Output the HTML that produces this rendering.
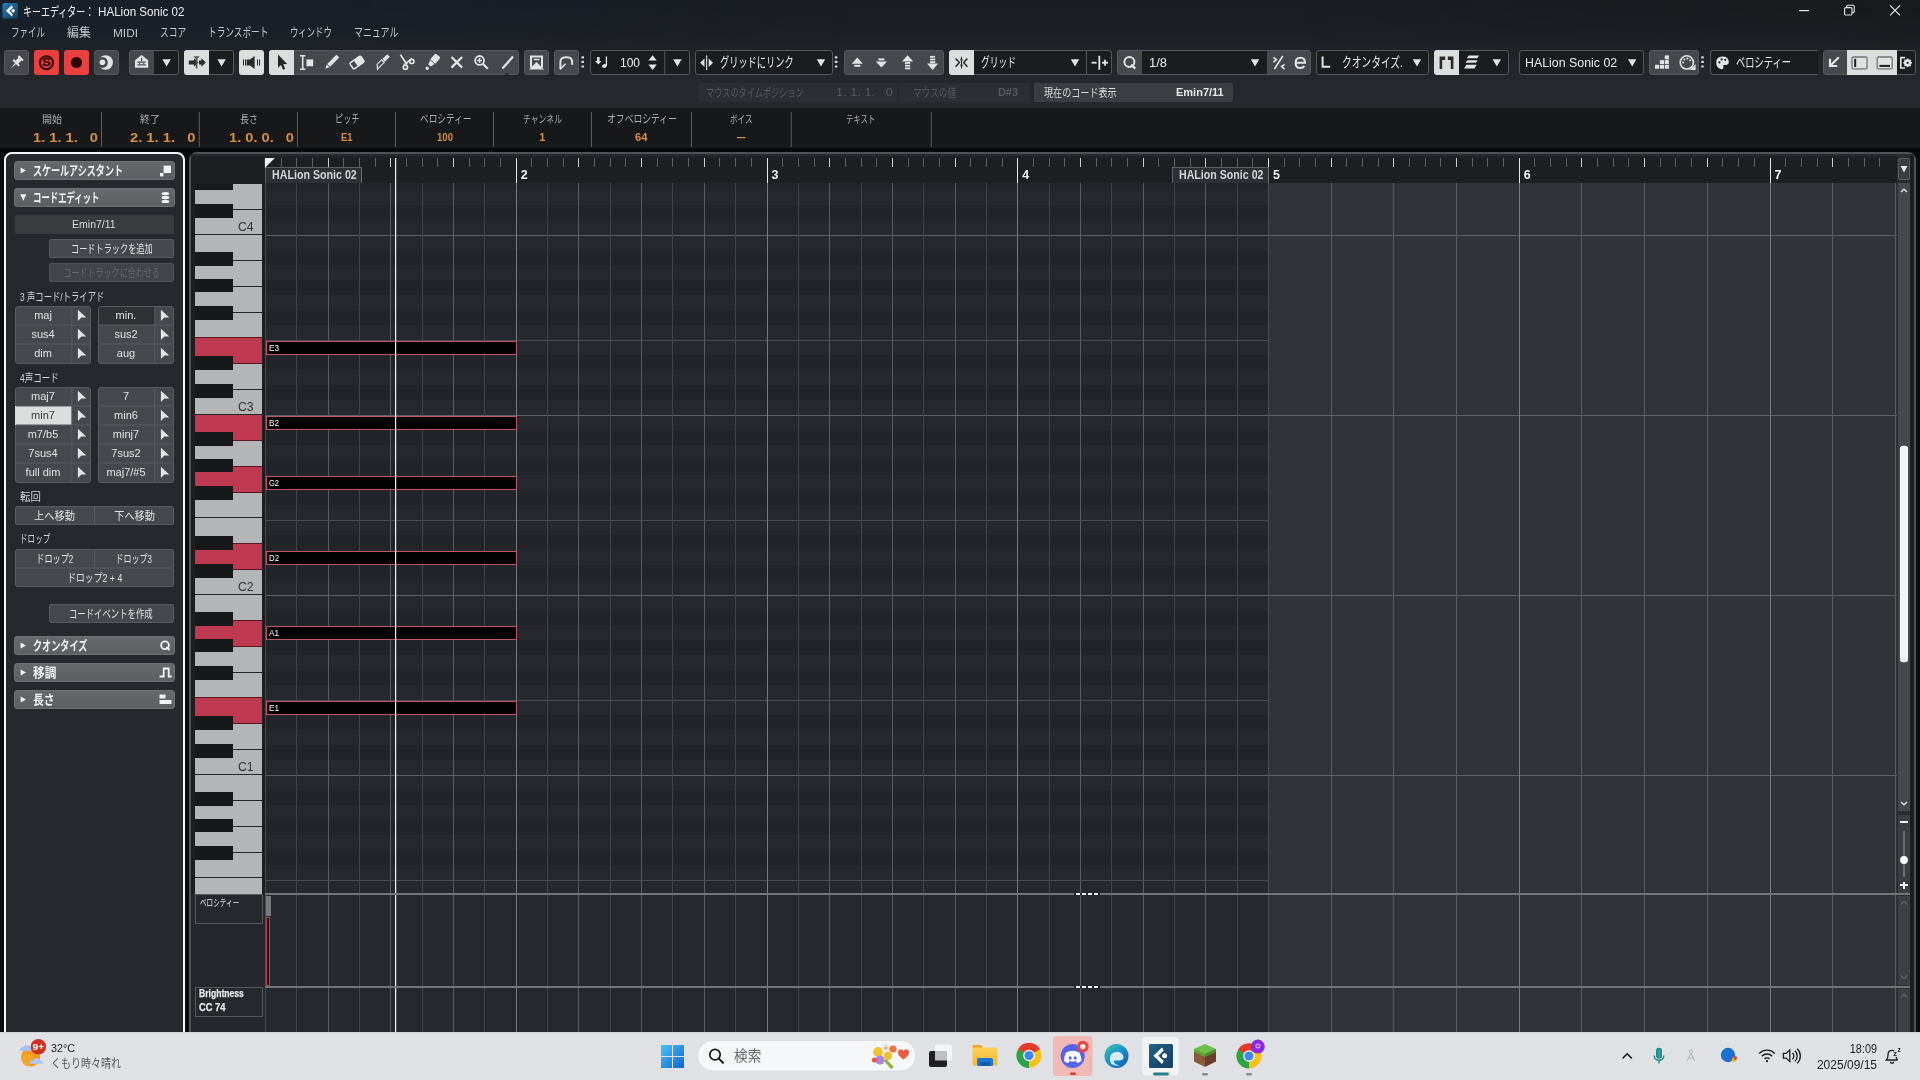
<!DOCTYPE html>
<html lang="ja"><head><meta charset="utf-8"><title>キーエディター： HALion Sonic 02</title>
<style>
html,body{margin:0;padding:0;background:#000;}
body{width:1920px;height:1080px;overflow:hidden;position:relative;font-family:"Liberation Sans","Noto Sans CJK JP",sans-serif;}
#r{will-change:transform;position:absolute;left:0;top:0;width:1920px;height:1080px;overflow:hidden;background:#0a0b0c;}
#r div,#r svg,#r span{position:absolute;box-sizing:border-box;}
#r span{white-space:pre;display:block;}
</style></head>
<body><div id="r">
<div style="left:0px;top:0px;width:1920px;height:108px;background:linear-gradient(180deg,#1a1d22 0px,#1c1f24 30px,#202327 52px,#24272b 78px,#26292d 108px);"></div>
<div style="left:0px;top:0px;width:1920px;height:80px;background:linear-gradient(90deg,rgba(22,38,58,.36) 0px,rgba(22,36,54,.26) 450px,rgba(24,28,34,0) 850px,rgba(20,20,20,0) 1300px,rgba(18,18,18,.30) 1920px);-webkit-mask-image:linear-gradient(180deg,#000 0,#000 12px,transparent 62px);mask-image:linear-gradient(180deg,#000 0,#000 12px,transparent 62px);"></div>
<div style="left:0px;top:108px;width:1920px;height:40px;background:#17181a;"></div>
<div style="left:0px;top:148px;width:1920px;height:4px;background:#070808;"></div>
<div style="left:4px;top:152px;width:181px;height:900px;background:#25282d;border:2px solid #f4f5f6;border-radius:8px;"></div>
<div style="left:189px;top:152px;width:1727px;height:900px;background:#1c1e21;border:2px solid #4e5155;border-radius:8px;"></div>
<span style="left:23.4px;top:3.14px;font-size:12.84px;line-height:18px;color:#eeeeee;transform:scaleX(0.699);transform-origin:0 50%;">キーエディター：</span>
<span style="left:98.3px;top:2.8px;font-size:12.5px;line-height:18px;color:#eeeeee;transform:scaleX(0.929);transform-origin:0 50%;">HALion Sonic 02</span>
<span style="left:10.8px;top:24.72px;font-size:12.41px;line-height:17px;color:#c4c6c8;transform:scaleX(0.685);transform-origin:0 50%;">ファイル</span>
<span style="left:67px;top:24.72px;font-size:12.41px;line-height:17px;color:#c4c6c8;transform:scaleX(0.959);transform-origin:0 50%;">編集</span>
<span style="left:113.3px;top:24.7px;font-size:11.6px;line-height:16px;color:#c4c6c8;transform:scaleX(1.021);transform-origin:0 50%;">MIDI</span>
<span style="left:160px;top:24.72px;font-size:12.41px;line-height:17px;color:#c4c6c8;transform:scaleX(0.704);transform-origin:0 50%;">スコア</span>
<span style="left:208px;top:24.72px;font-size:12.41px;line-height:17px;color:#c4c6c8;transform:scaleX(0.697);transform-origin:0 50%;">トランスポート</span>
<span style="left:290px;top:24.72px;font-size:12.41px;line-height:17px;color:#c4c6c8;transform:scaleX(0.674);transform-origin:0 50%;">ウィンドウ</span>
<span style="left:354px;top:24.72px;font-size:12.41px;line-height:17px;color:#c4c6c8;transform:scaleX(0.720);transform-origin:0 50%;">マニュアル</span>
<div style="left:4px;top:50px;width:25px;height:25px;background:#45484c;border:1px solid #56595d;border-radius:3px;"></div>
<div style="left:34px;top:50px;width:25px;height:25px;background:#e8413f;border-radius:3px;"></div>
<span style="left:43.06px;top:55.35px;font-size:10.6px;line-height:15px;color:#3a0606;font-weight:700;-webkit-text-stroke:.3px #3a0606;transform:scaleX(1.215);transform-origin:50% 50%;">S</span>
<div style="left:64px;top:50px;width:25px;height:25px;background:#e8413f;border-radius:3px;"></div>
<div style="left:94px;top:50px;width:25px;height:25px;background:#45484c;border:1px solid #56595d;border-radius:3px;"></div>
<div style="left:129px;top:50px;width:50px;height:25px;background:#45484c;border:1px solid #56595d;border-radius:3px;"></div>
<div style="left:154px;top:51px;width:24px;height:23px;background:#1b1c1e;border-radius:0px 2px 2px 0px;"></div>
<div style="left:184px;top:50px;width:50px;height:25px;background:#45484c;border:1px solid #56595d;border-radius:3px;"></div>
<div style="left:184px;top:50px;width:25px;height:25px;background:#dcdddd;border-radius:3px 0px 0px 3px;"></div>
<div style="left:209px;top:51px;width:24px;height:23px;background:#1b1c1e;border-radius:0px 2px 2px 0px;"></div>
<div style="left:239px;top:50px;width:25px;height:25px;background:#dcdddd;border-radius:3px;"></div>
<div style="left:269px;top:50px;width:250px;height:25px;background:#45484c;border:1px solid #56595d;border-radius:3px;"></div>
<div style="left:269px;top:50px;width:25px;height:25px;background:#dcdddd;border-radius:3px 0px 0px 3px;"></div>
<div style="left:524px;top:50px;width:25px;height:25px;background:#45484c;border:1px solid #56595d;border-radius:3px;"></div>
<div style="left:554px;top:50px;width:25px;height:25px;background:#45484c;border:1px solid #56595d;border-radius:3px;"></div>
<div style="left:590px;top:50px;width:100px;height:25px;background:#1b1c1e;border:1px solid #54575b;border-radius:3px;"></div>
<span style="left:620px;top:53.8px;font-size:12.5px;line-height:18px;color:#ececec;transform:scaleX(0.959);transform-origin:0 50%;">100</span>
<div style="left:695px;top:50px;width:137.5px;height:25px;background:#1b1c1e;border:1px solid #54575b;border-radius:3px;"></div>
<span style="left:720.3px;top:53.46px;font-size:13.27px;line-height:19px;color:#ececec;transform:scaleX(0.694);transform-origin:0 50%;">グリッドにリンク</span>
<div style="left:844px;top:50px;width:100px;height:25px;background:#45484c;border:1px solid #56595d;border-radius:3px;"></div>
<div style="left:949px;top:50px;width:163px;height:25px;background:#1b1c1e;border:1px solid #54575b;border-radius:3px;"></div>
<div style="left:949px;top:50px;width:25px;height:25px;background:#dcdddd;border-radius:3px 0px 0px 3px;"></div>
<span style="left:980.8px;top:53.46px;font-size:13.27px;line-height:19px;color:#ececec;transform:scaleX(0.660);transform-origin:0 50%;">グリッド</span>
<div style="left:1117px;top:50px;width:194px;height:25px;background:#45484c;border:1px solid #56595d;border-radius:3px;"></div>
<div style="left:1142px;top:51px;width:125px;height:23px;background:#1b1c1e;border-radius:0px 0px 0px 0px;"></div>
<span style="left:1149px;top:53.8px;font-size:12.5px;line-height:18px;color:#ececec;transform:scaleX(1.035);transform-origin:0 50%;">1/8</span>
<div style="left:1316px;top:50px;width:113px;height:25px;background:#1b1c1e;border:1px solid #54575b;border-radius:3px;"></div>
<span style="left:1341.7px;top:53.46px;font-size:13.27px;line-height:19px;color:#ececec;transform:scaleX(0.733);transform-origin:0 50%;">クオンタイズ.</span>
<div style="left:1434px;top:50px;width:75px;height:25px;background:#1b1c1e;border:1px solid #54575b;border-radius:3px;"></div>
<div style="left:1434px;top:50px;width:25px;height:25px;background:#dcdddd;border-radius:3px 0px 0px 3px;"></div>
<div style="left:1519px;top:50px;width:125px;height:25px;background:#1b1c1e;border:1px solid #54575b;border-radius:3px;"></div>
<span style="left:1525.3px;top:53.8px;font-size:12.5px;line-height:18px;color:#ececec;transform:scaleX(0.990);transform-origin:0 50%;">HALion Sonic 02</span>
<div style="left:1649px;top:50px;width:50px;height:25px;background:#45484c;border:1px solid #56595d;border-radius:3px;"></div>
<div style="left:1710px;top:50px;width:108px;height:25px;background:#1b1c1e;border:1px solid #54575b;border-right:none;border-radius:3px 0 0 3px;"></div>
<span style="left:1735.8px;top:53.36px;font-size:13.27px;line-height:19px;color:#ececec;transform:scaleX(0.698);transform-origin:0 50%;">ベロシティー</span>
<div style="left:1822.5px;top:50px;width:93.5px;height:25px;background:#45484c;border:1px solid #56595d;border-radius:3px;"></div>
<div style="left:1847px;top:50px;width:50px;height:25px;background:#dcdddd;border-radius:0px 0px 0px 0px;"></div>
<div style="left:1897px;top:51px;width:18px;height:23px;background:#1b1c1e;border-radius:0px 2px 2px 0px;"></div>
<div style="left:698px;top:82.5px;width:199.5px;height:19.5px;background:#2b2e32;border-radius:3px 0 0 3px;"></div>
<div style="left:899px;top:82.5px;width:130.5px;height:19.5px;background:#2b2e32;"></div>
<div style="left:1034px;top:82.5px;width:199px;height:19.5px;background:#3a3d41;border-radius:0 3px 3px 0;"></div>
<span style="left:706px;top:84.8px;font-size:11.77px;line-height:16px;color:#585b5f;transform:scaleX(0.693);transform-origin:0 50%;">マウスのタイムポジション</span>
<span style="left:836px;top:84.8px;font-size:11px;line-height:15px;color:#585b5f;transform:scaleX(1.165);transform-origin:0 50%;">1. 1. 1.   0</span>
<span style="left:912.5px;top:84.8px;font-size:11.77px;line-height:16px;color:#585b5f;transform:scaleX(0.732);transform-origin:0 50%;">マウスの値</span>
<span style="left:998px;top:84.8px;font-size:11px;line-height:15px;color:#585b5f;font-weight:700;transform:scaleX(0.991);transform-origin:0 50%;">D#3</span>
<span style="left:1043.7px;top:84.8px;font-size:11.77px;line-height:16px;color:#dadbdc;transform:scaleX(0.772);transform-origin:0 50%;">現在のコード表示</span>
<span style="left:1176px;top:84.8px;font-size:11px;line-height:15px;color:#e6e6e6;font-weight:700;">Emin7/11</span>
<span style="left:42px;top:111.75px;font-size:10.7px;line-height:15px;color:#a9abad;transform:scaleX(0.935);transform-origin:0 50%;">開始</span>
<span style="left:32.5px;top:129.9px;font-size:12px;line-height:17px;color:#d98e3c;font-weight:700;transform:scaleX(1.218);transform-origin:0 50%;">1. 1. 1.   0</span>
<span style="left:140px;top:111.75px;font-size:10.7px;line-height:15px;color:#a9abad;transform:scaleX(0.935);transform-origin:0 50%;">終了</span>
<span style="left:130px;top:129.9px;font-size:12px;line-height:17px;color:#d98e3c;font-weight:700;transform:scaleX(1.227);transform-origin:0 50%;">2. 1. 1.   0</span>
<span style="left:239.5px;top:111.75px;font-size:10.7px;line-height:15px;color:#a9abad;transform:scaleX(0.841);transform-origin:0 50%;">長さ</span>
<span style="left:228.8px;top:129.9px;font-size:12px;line-height:17px;color:#d98e3c;font-weight:700;transform:scaleX(1.218);transform-origin:0 50%;">1. 0. 0.   0</span>
<span style="left:335px;top:110.8px;font-size:11.77px;line-height:16px;color:#a9abad;transform:scaleX(0.694);transform-origin:0 50%;">ピッチ</span>
<span style="left:340.5px;top:131.4px;font-size:10px;line-height:14px;color:#d98e3c;font-weight:700;transform:scaleX(0.940);transform-origin:0 50%;">E1</span>
<span style="left:419.5px;top:110.8px;font-size:11.77px;line-height:16px;color:#a9abad;transform:scaleX(0.737);transform-origin:0 50%;">ベロシティー</span>
<span style="left:437px;top:131.4px;font-size:10px;line-height:14px;color:#d98e3c;font-weight:700;transform:scaleX(0.959);transform-origin:0 50%;">100</span>
<span style="left:522.7px;top:111.75px;font-size:10.7px;line-height:15px;color:#a9abad;transform:scaleX(0.734);transform-origin:0 50%;">チャンネル</span>
<span style="left:539.24px;top:129.9px;font-size:11px;line-height:15px;color:#d98e3c;font-weight:700;">1</span>
<span style="left:607px;top:110.8px;font-size:11.77px;line-height:16px;color:#a9abad;transform:scaleX(0.749);transform-origin:0 50%;">オフベロシティー</span>
<span style="left:635px;top:131.4px;font-size:10px;line-height:14px;color:#d98e3c;font-weight:700;transform:scaleX(1.115);transform-origin:0 50%;">64</span>
<span style="left:729.5px;top:111.75px;font-size:10.7px;line-height:15px;color:#a9abad;transform:scaleX(0.709);transform-origin:0 50%;">ボイス</span>
<span style="left:845.7px;top:111.75px;font-size:10.7px;line-height:15px;color:#a9abad;transform:scaleX(0.690);transform-origin:0 50%;">テキスト</span>
<svg style="left:0px;top:0px;" width="1920" height="150" viewBox="0 0 1920 150"><defs><linearGradient id="cb" x1="0" y1="0" x2="1" y2="1"><stop offset="0" stop-color="#2a7ab8"/><stop offset="1" stop-color="#123f63"/></linearGradient></defs><rect x="2.5" y="3" width="15.5" height="15.5" rx="1.5" fill="url(#cb)"/><path d="M11.8 5.2L6 10.8l5.8 5.6 1.1-2.2-3.5-3.4 3.5-3.4z" fill="#fff"/><circle cx="13.1" cy="10.8" r="1.7" fill="#fff"/><rect x="1799" y="10" width="10" height="1.2" fill="#e6e6e6"/><rect x="1844.6" y="7.6" width="7.4" height="7.4" rx="1.2" fill="none" stroke="#e6e6e6" stroke-width="1.1"/><path d="M1846.8 7.4v-1.2q0-1 1-1h5.2q1.2 0 1.2 1.2v5.2q0 1-1 1h-1.2" fill="none" stroke="#e6e6e6" stroke-width="1.1"/><path d="M1890 5.3l10 10M1900 5.3l-10 10" stroke="#e6e6e6" stroke-width="1.2"/><g transform="translate(16.5,62.5) rotate(45)" fill="#e2e3e4"><rect x="-3.2" y="-7" width="6.4" height="2.2"/><rect x="-2" y="-5" width="4" height="4.6"/><rect x="-4.2" y="-.6" width="8.4" height="2"/><path d="M-.8 1.4h1.6l-.8 7z"/></g><circle cx="46.5" cy="62.700" r="6.500" fill="none" stroke="#3a0606" stroke-width="2.100"/><circle cx="76.5" cy="62.5" r="5.6" fill="#2e0505"/><circle cx="105.600" cy="62.500" r="7.300" fill="#e2e3e4"/><circle cx="102.300" cy="62.400" r="5.500" fill="#45484c"/><rect x="94.500" y="54" width="5.500" height="17" fill="#45484c"/><circle cx="102.400" cy="62.300" r="2.800" fill="#e2e3e4"/><path d="M135 60.300l6.600-5.300 6.600 5.300v7.500h-13.200z" fill="#e2e3e4"/><g fill="#45484c"><rect x="137.400" y="61.500" width="8.400" height="1.200"/><rect x="137.400" y="64.300" width="8.400" height="1.200"/><rect x="141" y="58" width="1.200" height="3.500"/><rect x="139" y="62.700" width="1" height="1.600"/><rect x="143.200" y="62.700" width="1" height="1.600"/></g><path d="M162.4 59.13h8.4l-4.2 7.3500000000000005z" fill="#e2e3e4"/><path d="M188.8 60.6h5.2v-2.4l4.4 4.3-4.4 4.3v-2.4h-5.2z" fill="#2a2a2a"/><path d="M193.4 56.2h6.4l-2.4 2.6v9.6h-1.6v-9.6z" fill="#555"/><path d="M199 60.6h2.4v-2.4l4.4 4.3-4.4 4.3v-2.4h-2.4z" fill="#2a2a2a"/><path d="M217.4 59.13h8.4l-4.2 7.3500000000000005z" fill="#e2e3e4"/><path d="M246.6 59.6h3.4l4.6-3.6v13l-4.6-3.6h-3.4z" fill="#2a2a2a"/><rect x="243" y="59.5" width="1" height="6" fill="#2a2a2a"/><rect x="245" y="59.5" width="1" height="6" fill="#2a2a2a"/><rect x="257" y="59.5" width="1" height="6" fill="#2a2a2a"/><rect x="259" y="59.5" width="1" height="6" fill="#2a2a2a"/><path d="M278 54.6v13.2l3-2.7 2 4.6 2.2-1-2-4.5 4-.3z" fill="#262626"/><path d="M300 55h5.4v1.4h-1.9v12.2h1.9v1.4h-5.4v-1.4h1.9v-12.2h-1.9z" fill="#e2e3e4"/><rect x="306.4" y="59.4" width="6.8" height="6.8" fill="#e2e3e4"/><g transform="translate(331.5,62.5) rotate(45)" fill="#e2e3e4"><rect x="-2" y="-9" width="4" height="13"/><path d="M-2 4.8h4l-2 4z"/></g><g transform="translate(357,62.5) rotate(-35)"><rect x="-6.6" y="-3.6" width="13.2" height="7.2" rx="1.2" fill="none" stroke="#e2e3e4" stroke-width="1.5"/><rect x="-1.5" y="-3.6" width="8.1" height="7.2" rx="1" fill="#e2e3e4"/></g><g transform="translate(381.5,62.5) rotate(45)"><rect x="-1.8" y="-10" width="3.6" height="7" fill="#e2e3e4"/><path d="M-1.8 -2h3.6v9.5l-3.6-3z" fill="none" stroke="#e2e3e4" stroke-width="1.2"/></g><g fill="none" stroke="#e2e3e4" stroke-width="1.7"><path d="M400.4 54.8l6.6 9.6M412 58.4l-8 6.4"/><circle cx="405.4" cy="67.2" r="2.1"/><circle cx="411.8" cy="61.4" r="2.1"/></g><g transform="translate(432.5,62) rotate(40)" fill="#e2e3e4"><rect x="-3.4" y="-8.6" width="6.8" height="8.2" rx="1.2"/><path d="M-3 .2h6l-1.4 4.4h-3.2z"/><circle cx="0" cy="8.2" r="1.7"/></g><path d="M451.5 57l10.6 10.6M462.1 57l-10.6 10.6" stroke="#e2e3e4" stroke-width="2.3"/><circle cx="479.6" cy="60.4" r="4.4" fill="none" stroke="#e2e3e4" stroke-width="1.8"/><path d="M482.8 63.8l5 5" stroke="#e2e3e4" stroke-width="2.2"/><path d="M477.2 60.4h4.8M479.6 58v4.8" stroke="#e2e3e4" stroke-width="1.5"/><path d="M502.4 68.6l10.6-12" stroke="#e2e3e4" stroke-width="2.2"/><path d="M504.6 75l2.2-2.4 2.2 2.4z" fill="#25282c"/><path d="M530 55.4h13v2h-11v10h-2z M543 55.4v12h-2v-10z" fill="#e2e3e4"/><rect x="533.6" y="58.8" width="5.8" height="1.4" fill="#e2e3e4"/><path d="M529 69.4l7.5-7.4 7.5 7.4z" fill="#e2e3e4"/><path d="M560.4 68.8v-6.4q0-5.2 5.4-5.2h1.2q5.2 0 5.2 5.2v2.4" fill="none" stroke="#e2e3e4" stroke-width="2"/><path d="M560 69.4l5.6-5.6" stroke="#e2e3e4" stroke-width="1.6"/><rect x="581.4" y="56.2" width="2.6" height="2.2" rx=".5" fill="#d8d8d8"/><rect x="581.4" y="60.8" width="2.6" height="2.2" rx=".5" fill="#d8d8d8"/><rect x="581.4" y="65.4" width="2.6" height="2.2" rx=".5" fill="#d8d8d8"/><rect x="664.2" y="51" width="1" height="23" fill="#54575b"/><path d="M597 57h2.6v4h2l-3.3 3.6-3.3-3.6h2z" fill="#e2e3e4"/><path d="M606.4 56.4v9.4" stroke="#e2e3e4" stroke-width="1.3"/><ellipse cx="604.4" cy="66" rx="2.4" ry="1.8" fill="#e2e3e4" transform="rotate(-20 604.4 66)"/><path d="M648.4 60.6h8.4l-4.2-5.4z M648.4 64.6h8.4l-4.2 5.4z" fill="#e2e3e4"/><path d="M673.1999999999999 59.13h8.4l-4.2 7.3500000000000005z" fill="#e2e3e4"/><rect x="706.100" y="55.500" width="1.100" height="14.500" fill="#e2e3e4"/><path d="M700.200 62.700l4.300-4.300v8.600z M713 62.700l-4.300-4.300v8.600z" fill="#e2e3e4"/><path d="M816.8 59.13h8.4l-4.2 7.3500000000000005z" fill="#e2e3e4"/><rect x="834.8" y="56.2" width="2.6" height="2.2" rx=".5" fill="#d8d8d8"/><rect x="834.8" y="60.8" width="2.6" height="2.2" rx=".5" fill="#d8d8d8"/><rect x="834.8" y="65.4" width="2.6" height="2.2" rx=".5" fill="#d8d8d8"/><path d="M851.6999999999999 63.800000000000004h11.2l-5.6 -6.2z" fill="#e2e3e4"/><rect x="854.3" y="64.8" width="6" height="2" fill="#e2e3e4"/><path d="M875.8 61.4h11.2l-5.6 6.2z" fill="#e2e3e4"/><rect x="878.4" y="58.4" width="6" height="2" fill="#e2e3e4"/><path d="M902.0 61.6h11.2l-5.6 -6.4z" fill="#e2e3e4"/><rect x="905.0" y="62.1" width="5.2" height="1.8" fill="#e2e3e4"/><rect x="905.0" y="64.8" width="5.2" height="1.8" fill="#e2e3e4"/><rect x="905.0" y="67.5" width="5.2" height="1.8" fill="#e2e3e4"/><path d="M927.0 63.6h11.2l-5.6 6.4z" fill="#e2e3e4"/><rect x="930.0" y="61.300000000000004" width="5.2" height="1.8" fill="#e2e3e4"/><rect x="930.0" y="58.6" width="5.2" height="1.8" fill="#e2e3e4"/><rect x="930.0" y="55.9" width="5.2" height="1.8" fill="#e2e3e4"/><rect x="1086" y="51" width="1" height="23" fill="#54575b"/><g stroke="#2a2a2a" stroke-width="1.5" fill="none"><path d="M955.6 58.4l3.8 4.2-3.8 4.2M967.4 58.4l-3.8 4.2 3.8 4.2"/></g><path d="M961.5 56l1.3 4.6h-2.6z M961.5 69.2l1.3-4.6h-2.6z" fill="#2a2a2a"/><rect x="961" y="59" width="1" height="7" fill="#2a2a2a"/><path d="M1070.8 59.13h8.4l-4.2 7.3500000000000005z" fill="#e2e3e4"/><rect x="1091.6" y="61.8" width="5" height="1.8" fill="#e2e3e4"/><rect x="1098.4" y="55.8" width="1.8" height="14" fill="#e2e3e4"/><rect x="1102" y="61.8" width="6" height="1.8" fill="#e2e3e4"/><rect x="1104.1" y="59.7" width="1.8" height="6" fill="#e2e3e4"/><circle cx="1129.4" cy="62" r="5" fill="none" stroke="#e2e3e4" stroke-width="2"/><path d="M1131.2 64.6l4 4" stroke="#e2e3e4" stroke-width="2.2"/><path d="M1250.8 59.13h8.4l-4.2 7.3500000000000005z" fill="#e2e3e4"/><g stroke="#e2e3e4" stroke-width="1.6" fill="none"><path d="M1274.4 69l8.4-13"/><path d="M1273.4 57.4l3 2.2-3 2.6"/><path d="M1284.6 64.4l-3 2.2 3 2.6"/></g><path d="M1296.6 62.8h8.4q0-5-4.6-5-4.8 0-4.8 5.2 0 5 4.8 5 2.6 0 4-1.8" fill="none" stroke="#e2e3e4" stroke-width="2"/><path d="M1322.6 56.4v10.4h7.6" fill="none" stroke="#e2e3e4" stroke-width="2"/><path d="M1412.8 59.13h8.4l-4.2 7.3500000000000005z" fill="#e2e3e4"/><path d="M1439.6 69v-12.4h5.6v3.4h-3v9z M1447.8 56.6h5.6v12.4h-2.6v-9h-3z" fill="#2a2a2a"/><g fill="#e2e3e4"><path d="M1466.8 58.2l2-2.6h10.4l-2 2.6z"/><path d="M1465.4 62.8l2-2.6h10.4l-2 2.6z"/><path d="M1464 68.4l2.4-3.6h10.4l-2.4 3.6z"/></g><path d="M1492.6 59.13h8.4l-4.2 7.3500000000000005z" fill="#e2e3e4"/><path d="M1628.0 59.13h8.4l-4.2 7.3500000000000005z" fill="#e2e3e4"/><g fill="#e2e3e4"><rect x="1655.0" y="64.8" width="4.100" height="3.900"/><rect x="1659.9" y="64.8" width="4.100" height="3.900"/><rect x="1659.9" y="60.1" width="4.100" height="3.900"/><rect x="1664.8" y="64.8" width="4.100" height="3.900"/><rect x="1664.8" y="60.1" width="4.100" height="3.900"/><rect x="1664.8" y="55.4" width="4.100" height="3.900"/></g><circle cx="1686.8" cy="62.4" r="6.6" fill="none" stroke="#e2e3e4" stroke-width="1.6"/><g fill="#e2e3e4"><circle cx="1683" cy="62.6" r="1"/><circle cx="1684.4" cy="59.6" r="1"/><circle cx="1687.4" cy="58.6" r="1"/><circle cx="1690.2" cy="60.2" r="1"/><path d="M1695.6 64v6h-6z"/></g><rect x="1701.2" y="56.2" width="2.6" height="2.2" rx=".5" fill="#d8d8d8"/><rect x="1701.2" y="60.8" width="2.6" height="2.2" rx=".5" fill="#d8d8d8"/><rect x="1701.2" y="65.4" width="2.6" height="2.2" rx=".5" fill="#d8d8d8"/><path d="M1722.4 56.4q6.4 0 6.4 5.6 0 3-3.2 3h-1.4q-1.2 0-1 1.4l.2 1q.2 1.8-1.6 1.8-5.6-.6-5.6-6.4 0-6.4 6.200-6.400z" fill="#e2e3e4"/><circle cx="1719.4" cy="62.4" r="1.1" fill="#1b1c1e"/><circle cx="1721.6" cy="59.4" r="1.1" fill="#1b1c1e"/><circle cx="1725.200" cy="59.800" r="1.1" fill="#1b1c1e"/><path d="M1838.800 57.200l-8 8M1830 58.800v7.200h7.200" fill="none" stroke="#e2e3e4" stroke-width="2.2"/><rect x="1852" y="57" width="15" height="11.800" rx="1.200" fill="#e2e2e0" stroke="#727476" stroke-width="1.300"/><rect x="1854.200" y="58.800" width="2" height="8.200" fill="#1e1e1e"/><rect x="1877.200" y="57" width="15" height="11.800" rx="1.200" fill="#e2e2e0" stroke="#727476" stroke-width="1.300"/><rect x="1879.400" y="64.900" width="10.600" height="2" fill="#1e1e1e"/><path d="M1905 57.600h-4.200v10.400h4.200" fill="none" stroke="#e2e3e4" stroke-width="1.600"/><circle cx="1907.600" cy="62.800" r="2.600" fill="none" stroke="#e2e3e4" stroke-width="2"/><g stroke="#e2e3e4" stroke-width="1.400"><path d="M1907.600 58.400v8.800M1903.200 62.800h8.800M1904.500 59.700l6.200 6.200M1910.700 59.700l-6.200 6.200"/></g><circle cx="1907.600" cy="62.800" r="1.100" fill="#1b1c1e"/><rect x="101.0" y="112" width="1" height="35" fill="#5c5e60"/><rect x="198.8" y="112" width="1" height="35" fill="#5c5e60"/><rect x="297.0" y="112" width="1" height="35" fill="#5c5e60"/><rect x="395.0" y="112" width="1" height="35" fill="#5c5e60"/><rect x="493.0" y="112" width="1" height="35" fill="#5c5e60"/><rect x="591.0" y="112" width="1" height="35" fill="#5c5e60"/><rect x="691.0" y="112" width="1" height="35" fill="#5c5e60"/><rect x="790.7" y="112" width="1" height="35" fill="#5c5e60"/><rect x="930.7" y="112" width="1" height="35" fill="#5c5e60"/><rect x="737" y="137" width="8.600" height="1.200" fill="#d98e3c"/></svg>
<svg style="left:0px;top:0px;shape-rendering:crispEdges;" width="1920" height="1080" viewBox="0 0 1920 1080"><rect x="191" y="154" width="1723" height="29" fill="#1c1e21"/><rect x="265.5" y="154" width="1003" height="29" fill="#1d1f23"/><rect x="1268.5" y="154" width="641.5" height="29" fill="#1d1f23"/><rect x="191" y="154" width="1723" height="1.5" fill="#25282c"/><rect x="191" y="155.5" width="1723" height="1.5" fill="#212327"/><rect x="262" y="183" width="4" height="866" fill="#1b1d20"/><rect x="265.5" y="183" width="1003" height="710" fill="#25282d"/><rect x="1268.5" y="183" width="628.5" height="710" fill="#323338"/><rect x="265.5" y="183" width="1003" height="7" fill="#212428"/><rect x="265.5" y="205" width="1003" height="15" fill="#212428"/><rect x="265.5" y="250" width="1003" height="15" fill="#212428"/><rect x="265.5" y="280" width="1003" height="15" fill="#212428"/><rect x="265.5" y="310" width="1003" height="15" fill="#212428"/><rect x="265.5" y="355" width="1003" height="15" fill="#212428"/><rect x="265.5" y="385" width="1003" height="15" fill="#212428"/><rect x="265.5" y="430" width="1003" height="15" fill="#212428"/><rect x="265.5" y="460" width="1003" height="15" fill="#212428"/><rect x="265.5" y="490" width="1003" height="15" fill="#212428"/><rect x="265.5" y="535" width="1003" height="15" fill="#212428"/><rect x="265.5" y="565" width="1003" height="15" fill="#212428"/><rect x="265.5" y="610" width="1003" height="15" fill="#212428"/><rect x="265.5" y="640" width="1003" height="15" fill="#212428"/><rect x="265.5" y="670" width="1003" height="15" fill="#212428"/><rect x="265.5" y="715" width="1003" height="15" fill="#212428"/><rect x="265.5" y="745" width="1003" height="15" fill="#212428"/><rect x="265.5" y="790" width="1003" height="15" fill="#212428"/><rect x="265.5" y="820" width="1003" height="15" fill="#212428"/><rect x="265.5" y="850" width="1003" height="15" fill="#212428"/><rect x="191" y="894" width="74" height="156" fill="#24272b"/><rect x="265.5" y="893" width="1003" height="156" fill="#25282d"/><rect x="1268.5" y="893" width="628.5" height="156" fill="#323338"/><rect x="265.5" y="235" width="1003" height="1" fill="#5e6165"/><rect x="1268.5" y="235" width="629.5" height="1" fill="#606266"/><rect x="265.5" y="340" width="1003" height="1" fill="#484b4f"/><rect x="265.5" y="415" width="1003" height="1" fill="#5e6165"/><rect x="1268.5" y="415" width="629.5" height="1" fill="#606266"/><rect x="265.5" y="520" width="1003" height="1" fill="#484b4f"/><rect x="265.5" y="595" width="1003" height="1" fill="#5e6165"/><rect x="1268.5" y="595" width="629.5" height="1" fill="#606266"/><rect x="265.5" y="700" width="1003" height="1" fill="#484b4f"/><rect x="265.5" y="775" width="1003" height="1" fill="#5e6165"/><rect x="1268.5" y="775" width="629.5" height="1" fill="#606266"/><rect x="265.5" y="880" width="1003" height="1" fill="#484b4f"/><rect x="265" y="183" width="1" height="866" fill="#484b4f"/><rect x="296" y="183" width="1" height="866" fill="#414549"/><rect x="328" y="183" width="1" height="866" fill="#585b5f"/><rect x="359" y="183" width="1" height="866" fill="#414549"/><rect x="390" y="183" width="1" height="866" fill="#585b5f"/><rect x="422" y="183" width="1" height="866" fill="#414549"/><rect x="453" y="183" width="1" height="866" fill="#585b5f"/><rect x="484" y="183" width="1" height="866" fill="#414549"/><rect x="516" y="183" width="1" height="866" fill="#787a7e"/><rect x="547" y="183" width="1" height="866" fill="#414549"/><rect x="578" y="183" width="1" height="866" fill="#585b5f"/><rect x="610" y="183" width="1" height="866" fill="#414549"/><rect x="641" y="183" width="1" height="866" fill="#585b5f"/><rect x="672" y="183" width="1" height="866" fill="#414549"/><rect x="704" y="183" width="1" height="866" fill="#585b5f"/><rect x="735" y="183" width="1" height="866" fill="#414549"/><rect x="767" y="183" width="1" height="866" fill="#787a7e"/><rect x="798" y="183" width="1" height="866" fill="#414549"/><rect x="829" y="183" width="1" height="866" fill="#585b5f"/><rect x="861" y="183" width="1" height="866" fill="#414549"/><rect x="892" y="183" width="1" height="866" fill="#585b5f"/><rect x="923" y="183" width="1" height="866" fill="#414549"/><rect x="955" y="183" width="1" height="866" fill="#585b5f"/><rect x="986" y="183" width="1" height="866" fill="#414549"/><rect x="1017" y="183" width="1" height="866" fill="#787a7e"/><rect x="1049" y="183" width="1" height="866" fill="#414549"/><rect x="1080" y="183" width="1" height="866" fill="#585b5f"/><rect x="1111" y="183" width="1" height="866" fill="#414549"/><rect x="1143" y="183" width="1" height="866" fill="#585b5f"/><rect x="1174" y="183" width="1" height="866" fill="#414549"/><rect x="1205" y="183" width="1" height="866" fill="#585b5f"/><rect x="1237" y="183" width="1" height="866" fill="#414549"/><rect x="1268" y="183" width="1" height="866" fill="#4a4c50"/><rect x="1331" y="183" width="1" height="866" fill="#5c5e62"/><rect x="1393" y="183" width="1" height="866" fill="#5c5e62"/><rect x="1456" y="183" width="1" height="866" fill="#5c5e62"/><rect x="1519" y="183" width="1" height="866" fill="#7a7c80"/><rect x="1581" y="183" width="1" height="866" fill="#5c5e62"/><rect x="1644" y="183" width="1" height="866" fill="#5c5e62"/><rect x="1707" y="183" width="1" height="866" fill="#5c5e62"/><rect x="1770" y="183" width="1" height="866" fill="#7a7c80"/><rect x="1832" y="183" width="1" height="866" fill="#5c5e62"/><rect x="1895" y="183" width="1" height="866" fill="#5c5e62"/><rect x="265" y="158" width="1" height="9" fill="#c9cacc"/><rect x="281" y="158" width="1" height="9" fill="#5d6064"/><rect x="296" y="158" width="1" height="9" fill="#5d6064"/><rect x="312" y="158" width="1" height="9" fill="#5d6064"/><rect x="328" y="158" width="1" height="9" fill="#c9cacc"/><rect x="343" y="158" width="1" height="9" fill="#5d6064"/><rect x="359" y="158" width="1" height="9" fill="#5d6064"/><rect x="375" y="158" width="1" height="9" fill="#5d6064"/><rect x="390" y="158" width="1" height="9" fill="#c9cacc"/><rect x="406" y="158" width="1" height="9" fill="#5d6064"/><rect x="422" y="158" width="1" height="9" fill="#5d6064"/><rect x="437" y="158" width="1" height="9" fill="#5d6064"/><rect x="453" y="158" width="1" height="9" fill="#c9cacc"/><rect x="469" y="158" width="1" height="9" fill="#5d6064"/><rect x="484" y="158" width="1" height="9" fill="#5d6064"/><rect x="500" y="158" width="1" height="9" fill="#5d6064"/><rect x="516" y="158" width="1" height="25" fill="#e8e9ea"/><rect x="531" y="158" width="1" height="9" fill="#5d6064"/><rect x="547" y="158" width="1" height="9" fill="#5d6064"/><rect x="563" y="158" width="1" height="9" fill="#5d6064"/><rect x="578" y="158" width="1" height="9" fill="#c9cacc"/><rect x="594" y="158" width="1" height="9" fill="#5d6064"/><rect x="610" y="158" width="1" height="9" fill="#5d6064"/><rect x="625" y="158" width="1" height="9" fill="#5d6064"/><rect x="641" y="158" width="1" height="9" fill="#c9cacc"/><rect x="657" y="158" width="1" height="9" fill="#5d6064"/><rect x="672" y="158" width="1" height="9" fill="#5d6064"/><rect x="688" y="158" width="1" height="9" fill="#5d6064"/><rect x="704" y="158" width="1" height="9" fill="#c9cacc"/><rect x="719" y="158" width="1" height="9" fill="#5d6064"/><rect x="735" y="158" width="1" height="9" fill="#5d6064"/><rect x="751" y="158" width="1" height="9" fill="#5d6064"/><rect x="767" y="158" width="1" height="25" fill="#e8e9ea"/><rect x="782" y="158" width="1" height="9" fill="#5d6064"/><rect x="798" y="158" width="1" height="9" fill="#5d6064"/><rect x="814" y="158" width="1" height="9" fill="#5d6064"/><rect x="829" y="158" width="1" height="9" fill="#c9cacc"/><rect x="845" y="158" width="1" height="9" fill="#5d6064"/><rect x="861" y="158" width="1" height="9" fill="#5d6064"/><rect x="876" y="158" width="1" height="9" fill="#5d6064"/><rect x="892" y="158" width="1" height="9" fill="#c9cacc"/><rect x="908" y="158" width="1" height="9" fill="#5d6064"/><rect x="923" y="158" width="1" height="9" fill="#5d6064"/><rect x="939" y="158" width="1" height="9" fill="#5d6064"/><rect x="955" y="158" width="1" height="9" fill="#c9cacc"/><rect x="970" y="158" width="1" height="9" fill="#5d6064"/><rect x="986" y="158" width="1" height="9" fill="#5d6064"/><rect x="1002" y="158" width="1" height="9" fill="#5d6064"/><rect x="1017" y="158" width="1" height="25" fill="#e8e9ea"/><rect x="1033" y="158" width="1" height="9" fill="#5d6064"/><rect x="1049" y="158" width="1" height="9" fill="#5d6064"/><rect x="1064" y="158" width="1" height="9" fill="#5d6064"/><rect x="1080" y="158" width="1" height="9" fill="#c9cacc"/><rect x="1096" y="158" width="1" height="9" fill="#5d6064"/><rect x="1111" y="158" width="1" height="9" fill="#5d6064"/><rect x="1127" y="158" width="1" height="9" fill="#5d6064"/><rect x="1143" y="158" width="1" height="9" fill="#c9cacc"/><rect x="1158" y="158" width="1" height="9" fill="#5d6064"/><rect x="1174" y="158" width="1" height="9" fill="#5d6064"/><rect x="1190" y="158" width="1" height="9" fill="#5d6064"/><rect x="1205" y="158" width="1" height="9" fill="#c9cacc"/><rect x="1221" y="158" width="1" height="9" fill="#5d6064"/><rect x="1237" y="158" width="1" height="9" fill="#5d6064"/><rect x="1252" y="158" width="1" height="9" fill="#5d6064"/><rect x="1268" y="158" width="1" height="9" fill="#e8e9ea"/><rect x="1284" y="158" width="1" height="9" fill="#5d6064"/><rect x="1299" y="158" width="1" height="9" fill="#5d6064"/><rect x="1315" y="158" width="1" height="9" fill="#5d6064"/><rect x="1331" y="158" width="1" height="9" fill="#c9cacc"/><rect x="1346" y="158" width="1" height="9" fill="#5d6064"/><rect x="1362" y="158" width="1" height="9" fill="#5d6064"/><rect x="1378" y="158" width="1" height="9" fill="#5d6064"/><rect x="1393" y="158" width="1" height="9" fill="#c9cacc"/><rect x="1409" y="158" width="1" height="9" fill="#5d6064"/><rect x="1425" y="158" width="1" height="9" fill="#5d6064"/><rect x="1440" y="158" width="1" height="9" fill="#5d6064"/><rect x="1456" y="158" width="1" height="9" fill="#c9cacc"/><rect x="1472" y="158" width="1" height="9" fill="#5d6064"/><rect x="1487" y="158" width="1" height="9" fill="#5d6064"/><rect x="1503" y="158" width="1" height="9" fill="#5d6064"/><rect x="1519" y="158" width="1" height="25" fill="#e8e9ea"/><rect x="1534" y="158" width="1" height="9" fill="#5d6064"/><rect x="1550" y="158" width="1" height="9" fill="#5d6064"/><rect x="1566" y="158" width="1" height="9" fill="#5d6064"/><rect x="1581" y="158" width="1" height="9" fill="#c9cacc"/><rect x="1597" y="158" width="1" height="9" fill="#5d6064"/><rect x="1613" y="158" width="1" height="9" fill="#5d6064"/><rect x="1628" y="158" width="1" height="9" fill="#5d6064"/><rect x="1644" y="158" width="1" height="9" fill="#c9cacc"/><rect x="1660" y="158" width="1" height="9" fill="#5d6064"/><rect x="1675" y="158" width="1" height="9" fill="#5d6064"/><rect x="1691" y="158" width="1" height="9" fill="#5d6064"/><rect x="1707" y="158" width="1" height="9" fill="#c9cacc"/><rect x="1722" y="158" width="1" height="9" fill="#5d6064"/><rect x="1738" y="158" width="1" height="9" fill="#5d6064"/><rect x="1754" y="158" width="1" height="9" fill="#5d6064"/><rect x="1770" y="158" width="1" height="25" fill="#e8e9ea"/><rect x="1785" y="158" width="1" height="9" fill="#5d6064"/><rect x="1801" y="158" width="1" height="9" fill="#5d6064"/><rect x="1817" y="158" width="1" height="9" fill="#5d6064"/><rect x="1832" y="158" width="1" height="9" fill="#c9cacc"/><rect x="1848" y="158" width="1" height="9" fill="#5d6064"/><rect x="1864" y="158" width="1" height="9" fill="#5d6064"/><rect x="1879" y="158" width="1" height="9" fill="#5d6064"/><rect x="265" y="167" width="97" height="16" fill="#2d3034"/><rect x="265" y="167" width="97" height="1" fill="#5a5d61"/><rect x="265" y="167" width="1" height="16" fill="#5a5d61"/><rect x="361" y="167" width="1" height="16" fill="#6c6e72"/><rect x="1172" y="167" width="97" height="16" fill="#2d3034"/><rect x="1172" y="167" width="97" height="1" fill="#5a5d61"/><rect x="1172" y="167" width="1" height="16" fill="#5a5d61"/><rect x="1268" y="167" width="1" height="16" fill="#6c6e72"/><rect x="266.5" y="341" width="250" height="13" fill="#020202" stroke="#bd5763" stroke-width="1"/><rect x="266.5" y="416" width="250" height="13" fill="#020202" stroke="#bd5763" stroke-width="1"/><rect x="266.5" y="476" width="250" height="13" fill="#020202" stroke="#bd5763" stroke-width="1"/><rect x="266.5" y="551" width="250" height="13" fill="#020202" stroke="#bd5763" stroke-width="1"/><rect x="266.5" y="626" width="250" height="13" fill="#020202" stroke="#bd5763" stroke-width="1"/><rect x="266.5" y="701" width="250" height="13" fill="#020202" stroke="#bd5763" stroke-width="1"/><rect x="195" y="183" width="67" height="711" fill="#b4b5b6"/><rect x="195" y="183" width="67" height="1" fill="#242527"/><rect x="195" y="209" width="67" height="1" fill="#242527"/><rect x="195" y="234" width="67" height="1" fill="#242527"/><rect x="195" y="183" width="38" height="6.5" fill="#17181a"/><rect x="195" y="204" width="38" height="13.6" fill="#17181a"/><rect x="195" y="337.86" width="67" height="25.71" fill="#bf3a50"/><rect x="195" y="260" width="67" height="1" fill="#242527"/><rect x="195" y="286" width="67" height="1" fill="#242527"/><rect x="195" y="312" width="67" height="1" fill="#242527"/><rect x="195" y="337" width="67" height="1" fill="#5a1420"/><rect x="195" y="363" width="67" height="1" fill="#5a1420"/><rect x="195" y="389" width="67" height="1" fill="#242527"/><rect x="195" y="414" width="67" height="1" fill="#242527"/><rect x="195" y="252.2" width="38" height="13.5" fill="#17181a"/><rect x="195" y="278.5" width="38" height="13.5" fill="#17181a"/><rect x="195" y="306.2" width="38" height="13.6" fill="#17181a"/><rect x="195" y="356" width="38" height="13.5" fill="#17181a"/><rect x="195" y="384" width="38" height="13.6" fill="#17181a"/><rect x="195" y="415" width="67" height="25.71" fill="#bf3a50"/><rect x="195" y="466.43" width="67" height="25.71" fill="#bf3a50"/><rect x="195" y="543.57" width="67" height="25.71" fill="#bf3a50"/><rect x="195" y="440" width="67" height="1" fill="#5a1420"/><rect x="195" y="466" width="67" height="1" fill="#5a1420"/><rect x="195" y="492" width="67" height="1" fill="#5a1420"/><rect x="195" y="517" width="67" height="1" fill="#242527"/><rect x="195" y="543" width="67" height="1" fill="#5a1420"/><rect x="195" y="569" width="67" height="1" fill="#5a1420"/><rect x="195" y="594" width="67" height="1" fill="#242527"/><rect x="195" y="432.2" width="38" height="13.5" fill="#17181a"/><rect x="195" y="458.5" width="38" height="13.5" fill="#17181a"/><rect x="195" y="486.2" width="38" height="13.6" fill="#17181a"/><rect x="195" y="536" width="38" height="13.5" fill="#17181a"/><rect x="195" y="564" width="38" height="13.6" fill="#17181a"/><rect x="195" y="620.71" width="67" height="25.71" fill="#bf3a50"/><rect x="195" y="697.86" width="67" height="25.71" fill="#bf3a50"/><rect x="195" y="620" width="67" height="1" fill="#5a1420"/><rect x="195" y="646" width="67" height="1" fill="#5a1420"/><rect x="195" y="672" width="67" height="1" fill="#242527"/><rect x="195" y="697" width="67" height="1" fill="#5a1420"/><rect x="195" y="723" width="67" height="1" fill="#5a1420"/><rect x="195" y="749" width="67" height="1" fill="#242527"/><rect x="195" y="774" width="67" height="1" fill="#242527"/><rect x="195" y="612.2" width="38" height="13.5" fill="#17181a"/><rect x="195" y="638.5" width="38" height="13.5" fill="#17181a"/><rect x="195" y="666.2" width="38" height="13.6" fill="#17181a"/><rect x="195" y="716" width="38" height="13.5" fill="#17181a"/><rect x="195" y="744" width="38" height="13.6" fill="#17181a"/><rect x="195" y="800" width="67" height="1" fill="#242527"/><rect x="195" y="826" width="67" height="1" fill="#242527"/><rect x="195" y="852" width="67" height="1" fill="#242527"/><rect x="195" y="877" width="67" height="1" fill="#242527"/><rect x="195" y="792.2" width="38" height="13.5" fill="#17181a"/><rect x="195" y="818.5" width="38" height="13.5" fill="#17181a"/><rect x="195" y="846.2" width="38" height="13.6" fill="#17181a"/><rect x="195" y="183" width="67" height="1" fill="#1c1e21"/><rect x="195.5" y="894.5" width="67" height="29" fill="#25282c" stroke="#56595c" stroke-width="1"/><rect x="195.5" y="987.5" width="67" height="29" fill="#25282c" stroke="#56595c" stroke-width="1"/><rect x="266" y="896" width="4.6" height="19.5" fill="#77797b"/><rect x="266.5" y="917.5" width="3" height="67.5" fill="#2a0a12" stroke="#b04458" stroke-width="1"/><rect x="395" y="158" width="1" height="891" fill="#f0f0f0"/><rect x="396" y="158" width="1" height="891" fill="rgba(240,240,240,.22)"/><rect x="1897" y="154" width="13.5" height="895" fill="#2a2c2f"/><rect x="1897.5" y="183" width="12.5" height="628" fill="#46484c"/><rect x="1898.5" y="158.5" width="11" height="21" rx="2.5" fill="#3a3c40" stroke="#585a5e" stroke-width="1"/><rect x="1900" y="445.8" width="8" height="216.4" rx="3" fill="#f1f3f5"/><rect x="1897.5" y="815" width="12.5" height="78" fill="#3b3d41"/><rect x="1900.2" y="821.2" width="7.6" height="1.8" fill="#f4f4f4"/><rect x="1903.4" y="831" width="1.2" height="46" fill="#6a6c70"/><rect x="1900.4" y="884.3" width="7.4" height="1.8" fill="#f4f4f4"/><rect x="1903.2" y="881.5" width="1.8" height="7.4" fill="#f4f4f4"/><rect x="1897.5" y="896" width="12.5" height="89" fill="#3d3f43"/><rect x="1897.5" y="989" width="12.5" height="60" fill="#3d3f43"/><rect x="265" y="893" width="1645" height="2" fill="#737578"/><rect x="265" y="986" width="1645" height="2" fill="#737578"/><rect x="1074" y="893" width="26" height="2" fill="#25282d"/><rect x="1076" y="893" width="4" height="2" fill="#f2f2f2"/><rect x="1082" y="893" width="4" height="2" fill="#f2f2f2"/><rect x="1088" y="893" width="4" height="2" fill="#f2f2f2"/><rect x="1094" y="893" width="4" height="2" fill="#f2f2f2"/><rect x="1074" y="986" width="26" height="2" fill="#25282d"/><rect x="1076" y="986" width="4" height="2" fill="#f2f2f2"/><rect x="1082" y="986" width="4" height="2" fill="#f2f2f2"/><rect x="1088" y="986" width="4" height="2" fill="#f2f2f2"/><rect x="1094" y="986" width="4" height="2" fill="#f2f2f2"/><rect x="1910" y="156" width="3" height="893" fill="#1c1d1f"/></svg>
<svg style="left:0px;top:0px;" width="1920" height="1080" viewBox="0 0 1920 1080"><path d="M264.9 158 h10 l-10 10z" fill="#f2f2f2"/><path d="M1901 192l3-2.800 3 2.800" fill="none" stroke="#e4e4e4" stroke-width="1.300"/><path d="M1901 802l3 2.800 3-2.800" fill="none" stroke="#e4e4e4" stroke-width="1.300"/><circle cx="1904" cy="860" r="3.9" fill="#fafafa"/><path d="M1900.6 904.6l3.4-3.2 3.4 3.2" fill="none" stroke="#66686c" stroke-width="1.2"/><path d="M1900.6 975.4l3.4 3.2 3.4-3.2" fill="none" stroke="#66686c" stroke-width="1.2"/><path d="M1900.6 997.6l3.4-3.2 3.4 3.2" fill="none" stroke="#66686c" stroke-width="1.2"/><rect x="1900" y="445.8" width="8" height="216.4" rx="3.2" fill="#f1f3f5"/><path d="M1900.500 166h7l-3.500 6.400z" fill="#e8e8e8"/></svg>
<span style="left:271.5px;top:166.8px;font-size:12px;line-height:17px;color:#d4d5d6;font-weight:700;transform:scaleX(0.889);transform-origin:0 50%;">HALion Sonic 02</span>
<span style="left:1178.5px;top:166.8px;font-size:12px;line-height:17px;color:#d4d5d6;font-weight:700;transform:scaleX(0.886);transform-origin:0 50%;">HALion Sonic 02</span>
<span style="left:520.85px;top:165.6px;font-size:12.5px;line-height:18px;color:#f4f4f4;font-weight:700;">2</span>
<span style="left:771.6px;top:165.6px;font-size:12.5px;line-height:18px;color:#f4f4f4;font-weight:700;">3</span>
<span style="left:1022.35px;top:165.6px;font-size:12.5px;line-height:18px;color:#f4f4f4;font-weight:700;">4</span>
<span style="left:1273.1px;top:165.6px;font-size:12.5px;line-height:18px;color:#f4f4f4;font-weight:700;">5</span>
<span style="left:1523.85px;top:165.6px;font-size:12.5px;line-height:18px;color:#f4f4f4;font-weight:700;">6</span>
<span style="left:1774.6px;top:165.6px;font-size:12.5px;line-height:18px;color:#f4f4f4;font-weight:700;">7</span>
<span style="left:238px;top:216.8px;font-size:13.7px;line-height:19px;color:#303133;transform:scaleX(0.891);transform-origin:0 50%;">C4</span>
<span style="left:238px;top:396.8px;font-size:13.7px;line-height:19px;color:#303133;transform:scaleX(0.891);transform-origin:0 50%;">C3</span>
<span style="left:238px;top:576.8px;font-size:13.7px;line-height:19px;color:#303133;transform:scaleX(0.891);transform-origin:0 50%;">C2</span>
<span style="left:238px;top:756.8px;font-size:13.7px;line-height:19px;color:#303133;transform:scaleX(0.891);transform-origin:0 50%;">C1</span>
<span style="left:269.4px;top:341.8px;font-size:9px;line-height:13px;color:#ffffff;transform:scaleX(0.908);transform-origin:0 50%;">E3</span>
<span style="left:269.4px;top:416.8px;font-size:9px;line-height:13px;color:#ffffff;transform:scaleX(0.908);transform-origin:0 50%;">B2</span>
<span style="left:269.4px;top:476.8px;font-size:9px;line-height:13px;color:#ffffff;transform:scaleX(0.832);transform-origin:0 50%;">G2</span>
<span style="left:269.4px;top:551.8px;font-size:9px;line-height:13px;color:#ffffff;transform:scaleX(0.868);transform-origin:0 50%;">D2</span>
<span style="left:269.4px;top:626.8px;font-size:9px;line-height:13px;color:#ffffff;transform:scaleX(0.908);transform-origin:0 50%;">A1</span>
<span style="left:269.4px;top:701.8px;font-size:9px;line-height:13px;color:#ffffff;transform:scaleX(0.908);transform-origin:0 50%;">E1</span>
<span style="left:199.7px;top:896.4px;font-size:9.63px;line-height:13px;color:#e6e6e6;transform:scaleX(0.687);transform-origin:0 50%;">ベロシティー</span>
<span style="left:199.2px;top:987px;font-size:10px;line-height:14px;color:#e8e8e8;font-weight:700;-webkit-text-stroke:.25px #e8e8e8;transform:scaleX(0.858);transform-origin:0 50%;">Brightness</span>
<span style="left:199.2px;top:1001.3px;font-size:10px;line-height:14px;color:#e8e8e8;font-weight:700;-webkit-text-stroke:.25px #e8e8e8;transform:scaleX(0.931);transform-origin:0 50%;">CC 74</span>
<div style="left:14px;top:161px;width:161px;height:19px;background:linear-gradient(180deg,#66696b 0%,#5d6062 100%);border-radius:3px;border:1px solid #6f7274;"></div>
<span style="left:33px;top:162.14px;font-size:12.84px;line-height:18px;color:#f2f2f2;font-weight:700;transform:scaleX(0.704);transform-origin:0 50%;">スケールアシスタント</span>
<div style="left:14px;top:188px;width:161px;height:19px;background:linear-gradient(180deg,#66696b 0%,#5d6062 100%);border-radius:3px;border:1px solid #6f7274;"></div>
<span style="left:33px;top:189.14px;font-size:12.84px;line-height:18px;color:#f2f2f2;font-weight:700;transform:scaleX(0.653);transform-origin:0 50%;">コードエディット</span>
<div style="left:14px;top:636px;width:161px;height:19px;background:linear-gradient(180deg,#66696b 0%,#5d6062 100%);border-radius:3px;border:1px solid #6f7274;"></div>
<span style="left:33px;top:637.14px;font-size:12.84px;line-height:18px;color:#f2f2f2;font-weight:700;transform:scaleX(0.709);transform-origin:0 50%;">クオンタイズ</span>
<div style="left:14px;top:663px;width:161px;height:19px;background:linear-gradient(180deg,#66696b 0%,#5d6062 100%);border-radius:3px;border:1px solid #6f7274;"></div>
<span style="left:33px;top:664.14px;font-size:12.84px;line-height:18px;color:#f2f2f2;font-weight:700;transform:scaleX(0.908);transform-origin:0 50%;">移調</span>
<div style="left:14px;top:690px;width:161px;height:19px;background:linear-gradient(180deg,#66696b 0%,#5d6062 100%);border-radius:3px;border:1px solid #6f7274;"></div>
<span style="left:33px;top:691.14px;font-size:12.84px;line-height:18px;color:#f2f2f2;font-weight:700;transform:scaleX(0.838);transform-origin:0 50%;">長さ</span>
<div style="left:15px;top:215.3px;width:159px;height:18.8px;background:#393b3f;border-radius:2px;"></div>
<span style="left:71.47px;top:217px;font-size:11px;line-height:15px;color:#dcdcdc;transform:scaleX(0.953);transform-origin:50% 50%;">Emin7/11</span>
<div style="left:49px;top:239px;width:125px;height:19px;background:#45484c;border:1px solid #585b5f;border-radius:2px;"></div>
<span style="left:52.56px;top:241.09px;font-size:11.77px;line-height:16px;color:#e4e4e4;transform:scaleX(0.693);transform-origin:50% 50%;">コードトラックを追加</span>
<div style="left:49px;top:263px;width:125px;height:19px;background:#414448;border:1px solid #505357;border-radius:2px;"></div>
<span style="left:41.4px;top:264.89px;font-size:11.77px;line-height:16px;color:#66696c;transform:scaleX(0.683);transform-origin:50% 50%;">コードトラックに合わせる</span>
<span style="left:20px;top:288.8px;font-size:11.77px;line-height:16px;color:#d2d3d4;transform:scaleX(0.709);transform-origin:0 50%;">3 声コード/トライアド</span>
<span style="left:20px;top:370.1px;font-size:11.77px;line-height:16px;color:#d2d3d4;transform:scaleX(0.724);transform-origin:0 50%;">4声コード</span>
<span style="left:20.4px;top:488.8px;font-size:11.77px;line-height:16px;color:#d2d3d4;transform:scaleX(0.888);transform-origin:0 50%;">転回</span>
<span style="left:20px;top:531px;font-size:11.77px;line-height:16px;color:#d2d3d4;transform:scaleX(0.644);transform-origin:0 50%;">ドロップ</span>
<div style="left:15px;top:306px;width:76px;height:57.5px;background:#45484c;border:1px solid #585b5f;border-radius:3px;"></div>
<span style="left:34.13px;top:308.2px;font-size:11px;line-height:15px;color:#e2e2e2;">maj</span>
<span style="left:31.38px;top:327.2px;font-size:11px;line-height:15px;color:#e2e2e2;">sus4</span>
<span style="left:34.13px;top:346.2px;font-size:11px;line-height:15px;color:#e2e2e2;">dim</span>
<div style="left:98px;top:306px;width:76px;height:57.5px;background:#45484c;border:1px solid #585b5f;border-radius:3px;"></div>
<div style="left:99px;top:307px;width:55.5px;height:18px;background:#2f3134;"></div>
<span style="left:115.61px;top:308.2px;font-size:11px;line-height:15px;color:#e2e2e2;">min.</span>
<span style="left:114.38px;top:327.2px;font-size:11px;line-height:15px;color:#e2e2e2;">sus2</span>
<span style="left:116.82px;top:346.2px;font-size:11px;line-height:15px;color:#e2e2e2;">aug</span>
<div style="left:15px;top:387px;width:76px;height:95.5px;background:#45484c;border:1px solid #585b5f;border-radius:3px;"></div>
<span style="left:31.08px;top:389.2px;font-size:11px;line-height:15px;color:#e2e2e2;">maj7</span>
<div style="left:15px;top:406px;width:57px;height:19px;background:#dcdddd;"></div>
<span style="left:31.08px;top:408.2px;font-size:11px;line-height:15px;color:#3a3a3a;">min7</span>
<span style="left:27.71px;top:427.2px;font-size:11px;line-height:15px;color:#e2e2e2;">m7/b5</span>
<span style="left:28.32px;top:446.2px;font-size:11px;line-height:15px;color:#e2e2e2;">7sus4</span>
<span style="left:25.58px;top:465.2px;font-size:11px;line-height:15px;color:#e2e2e2;">full dim</span>
<div style="left:98px;top:387px;width:76px;height:95.5px;background:#45484c;border:1px solid #585b5f;border-radius:3px;"></div>
<span style="left:122.94px;top:389.2px;font-size:11px;line-height:15px;color:#e2e2e2;">7</span>
<span style="left:114.08px;top:408.2px;font-size:11px;line-height:15px;color:#e2e2e2;">min6</span>
<span style="left:112.85px;top:427.2px;font-size:11px;line-height:15px;color:#e2e2e2;">minj7</span>
<span style="left:111.32px;top:446.2px;font-size:11px;line-height:15px;color:#e2e2e2;">7sus2</span>
<span style="left:106.43px;top:465.2px;font-size:11px;line-height:15px;color:#e2e2e2;">maj7/#5</span>
<div style="left:15px;top:506px;width:159px;height:19px;background:#45484c;border:1px solid #585b5f;border-radius:2px;"></div>
<span style="left:31.46px;top:507.5px;font-size:11.77px;line-height:16px;color:#e2e2e2;transform:scaleX(0.871);transform-origin:50% 50%;">上へ移動</span>
<span style="left:111.16px;top:507.5px;font-size:11.77px;line-height:16px;color:#e2e2e2;transform:scaleX(0.862);transform-origin:50% 50%;">下へ移動</span>
<div style="left:15px;top:549px;width:159px;height:37.5px;background:#45484c;border:1px solid #585b5f;border-radius:2px;"></div>
<span style="left:27.9px;top:550.7px;font-size:11.77px;line-height:16px;color:#e2e2e2;transform:scaleX(0.690);transform-origin:50% 50%;">ドロップ2</span>
<span style="left:107.4px;top:550.7px;font-size:11.77px;line-height:16px;color:#e2e2e2;transform:scaleX(0.679);transform-origin:50% 50%;">ドロップ3</span>
<span style="left:57.72px;top:569.7px;font-size:11.77px;line-height:16px;color:#e2e2e2;transform:scaleX(0.748);transform-origin:50% 50%;">ドロップ2 + 4</span>
<div style="left:49px;top:604px;width:125px;height:19px;background:#45484c;border:1px solid #585b5f;border-radius:2px;"></div>
<span style="left:52.36px;top:605.7px;font-size:11.77px;line-height:16px;color:#e2e2e2;transform:scaleX(0.711);transform-origin:50% 50%;">コードイベントを作成</span>
<svg style="left:0px;top:0px;" width="190" height="720" viewBox="0 0 190 720"><path d="M20.6 167.5v6l5.4-3z" fill="#f0f0f0"/><path d="M20.2 194.3h6.2l-3.1 6.4z" fill="#f0f0f0"/><path d="M20.6 642.5v6l5.4-3z" fill="#f0f0f0"/><path d="M20.6 669.5v6l5.4-3z" fill="#f0f0f0"/><path d="M20.6 696.5v6l5.4-3z" fill="#f0f0f0"/><rect x="160" y="173" width="3.4" height="3.4" fill="#f2f2f2"/><rect x="163.6" y="165.6" width="7.4" height="7.4" fill="#f2f2f2"/><ellipse cx="165.4" cy="193.6" rx="3.9" ry="1.7" fill="#f2f2f2"/><ellipse cx="165.4" cy="197.5" rx="3.9" ry="1.7" fill="#f2f2f2"/><ellipse cx="165.4" cy="201.4" rx="3.9" ry="1.7" fill="#f2f2f2"/><circle cx="165" cy="645.3" r="3.9" fill="none" stroke="#f2f2f2" stroke-width="1.8"/><path d="M166.5 647l3 3" stroke="#f2f2f2" stroke-width="1.8"/><path d="M159.5 676.5h4.2v-8h5v8h3" fill="none" stroke="#f2f2f2" stroke-width="1.8"/><rect x="159.5" y="694.5" width="6" height="4" fill="#f2f2f2"/><rect x="159.5" y="700" width="12" height="4" fill="#f2f2f2"/><path d="M77.9 309.8l8.400 7.600-4.900 .200-3.500 3.500z" fill="#e4e4e4"/><rect x="16" y="324.5" width="74" height="1" fill="#585b5f"/><path d="M77.9 328.8l8.400 7.600-4.900 .200-3.500 3.500z" fill="#e4e4e4"/><rect x="16" y="343.5" width="74" height="1" fill="#585b5f"/><path d="M77.9 347.8l8.400 7.600-4.900 .200-3.500 3.500z" fill="#e4e4e4"/><rect x="71.3" y="307" width="1" height="55.5" fill="#585b5f"/><path d="M160.9 309.8l8.400 7.600-4.900 .200-3.500 3.500z" fill="#e4e4e4"/><rect x="99" y="324.5" width="74" height="1" fill="#585b5f"/><path d="M160.9 328.8l8.400 7.600-4.900 .200-3.500 3.500z" fill="#e4e4e4"/><rect x="99" y="343.5" width="74" height="1" fill="#585b5f"/><path d="M160.9 347.8l8.400 7.600-4.900 .200-3.500 3.500z" fill="#e4e4e4"/><rect x="154.3" y="307" width="1" height="55.5" fill="#585b5f"/><path d="M77.9 390.8l8.400 7.600-4.900 .200-3.500 3.500z" fill="#e4e4e4"/><rect x="16" y="405.5" width="74" height="1" fill="#585b5f"/><path d="M77.9 409.8l8.400 7.600-4.900 .200-3.500 3.500z" fill="#e4e4e4"/><rect x="16" y="424.5" width="74" height="1" fill="#585b5f"/><path d="M77.9 428.8l8.400 7.600-4.900 .200-3.500 3.500z" fill="#e4e4e4"/><rect x="16" y="443.5" width="74" height="1" fill="#585b5f"/><path d="M77.9 447.8l8.400 7.600-4.900 .200-3.500 3.500z" fill="#e4e4e4"/><rect x="16" y="462.5" width="74" height="1" fill="#585b5f"/><path d="M77.9 466.8l8.400 7.600-4.900 .200-3.500 3.500z" fill="#e4e4e4"/><rect x="71.3" y="388" width="1" height="93.5" fill="#585b5f"/><path d="M160.9 390.8l8.400 7.600-4.900 .200-3.500 3.500z" fill="#e4e4e4"/><rect x="99" y="405.5" width="74" height="1" fill="#585b5f"/><path d="M160.9 409.8l8.400 7.600-4.900 .200-3.500 3.500z" fill="#e4e4e4"/><rect x="99" y="424.5" width="74" height="1" fill="#585b5f"/><path d="M160.9 428.8l8.400 7.600-4.900 .200-3.500 3.500z" fill="#e4e4e4"/><rect x="99" y="443.5" width="74" height="1" fill="#585b5f"/><path d="M160.9 447.8l8.400 7.600-4.900 .200-3.500 3.500z" fill="#e4e4e4"/><rect x="99" y="462.5" width="74" height="1" fill="#585b5f"/><path d="M160.9 466.8l8.400 7.600-4.900 .200-3.500 3.500z" fill="#e4e4e4"/><rect x="154.3" y="388" width="1" height="93.5" fill="#585b5f"/><rect x="94" y="507" width="1" height="17" fill="#585b5f"/><rect x="94" y="550" width="1" height="17.5" fill="#585b5f"/><rect x="16" y="567.5" width="157" height="1" fill="#585b5f"/></svg>
<div style="left:0px;top:1032px;width:1920px;height:48px;background:#dfe1e4;"></div>
<div style="left:0px;top:1032px;width:1920px;height:1px;background:#cfd1d4;"></div>
<svg style="left:0px;top:1032px;" width="1920" height="48" viewBox="0 0 1920 48"><defs>
<linearGradient id="wn" gradientUnits="userSpaceOnUse" x1="661" y1="13" x2="684" y2="36"><stop offset="0" stop-color="#4cc2f5"/><stop offset="1" stop-color="#0a66d0"/></linearGradient>
<linearGradient id="fd" x1="0" y1="0" x2="0" y2="1"><stop offset="0" stop-color="#ffd75e"/><stop offset="1" stop-color="#f5b52e"/></linearGradient>
<linearGradient id="ed" x1="0" y1="0" x2="1" y2="1"><stop offset="0" stop-color="#35c1a0"/><stop offset=".5" stop-color="#1b8fd6"/><stop offset="1" stop-color="#0c59a4"/></linearGradient>
<linearGradient id="cu" x1="0" y1="0" x2="1" y2="1"><stop offset="0" stop-color="#23608c"/><stop offset="1" stop-color="#123e5e"/></linearGradient>
</defs><circle cx="30.600" cy="25" r="9.600" fill="#f39a1e"/><circle cx="28" cy="28" r="6" fill="#f5a52a"/><path d="M19.400 18.800a3.400 3.400 0 0 1 3.600-3.600a4.600 4.600 0 0 1 8.400 1.400q1.600 1.400 .6 2.400h-11.600q-1 0-1-.2z" fill="#a9c1ee"/><path d="M29.600 31.600a3.200 3.200 0 0 1 3.400-3.400a4.600 4.600 0 0 1 8.200 1q2 .800 1.600 2.600h-12.400q-.8 0-.8-.2z" fill="#abc6f6"/><circle cx="38.400" cy="14.700" r="7.700" fill="#cf3122"/><rect x="661" y="13" width="11" height="11" rx=".6" fill="url(#wn)"/><rect x="673" y="13" width="11" height="11" rx=".6" fill="url(#wn)"/><rect x="661" y="25" width="11" height="11" rx=".6" fill="url(#wn)"/><rect x="673" y="25" width="11" height="11" rx=".6" fill="url(#wn)"/><rect x="697.500" y="8.5" width="218.500" height="30.500" rx="15.250" fill="#f6f7f9" stroke="#d6d8dc" stroke-width=".8"/><circle cx="715" cy="22.59999999999991" r="5.200" fill="none" stroke="#1c1c1c" stroke-width="1.700"/><path d="M718.800 26.59999999999991l4.200 4.200" stroke="#1c1c1c" stroke-width="2" stroke-linecap="round"/><g transform="translate(0,-1032)"><circle cx="878" cy="1052" r="5" fill="#f4c430"/><circle cx="886" cy="1048" r="4.400" fill="#e8e8f4"/><circle cx="886" cy="1048" r="1.600" fill="#f0b030"/><circle cx="893" cy="1049" r="3.600" fill="#f0733a"/><circle cx="888" cy="1056" r="4.200" fill="#f0c02c"/><circle cx="880" cy="1060" r="4.600" fill="#a888e0"/><circle cx="874.500" cy="1060" r="2.600" fill="#e85a4a"/><path d="M886 1059l8 8-3 2-7-8z" fill="#8ab83a"/><path d="M903.500 1059.500c-4-3-5.500-5-5.500-7a2.800 2.800 0 0 1 5.500-1a2.800 2.800 0 0 1 5.500 1c0 2-1.500 4-5.500 7z" fill="#ec5b44"/></g><rect x="935" y="12.5" width="17" height="16" rx="2" fill="#f4f5f6"/><rect x="929" y="19" width="18" height="16" rx="2" fill="#1f1f1f"/><rect x="935" y="19" width="12" height="9.500" fill="#bfc0c2"/><path d="M972.500 15q0-2 2-2h6l2.500 2.500h12.500q2 0 2 2v14q0 2-2 2h-21q-2 0-2-2z" fill="url(#fd)"/><path d="M972.500 15q0-2 2-2h6l2.500 2.500h-10.500z" fill="#e8a41e"/><rect x="977" y="26" width="16" height="8" rx="1.500" fill="#1977d2"/><rect x="980" y="30" width="10" height="4" fill="#0e5cab"/><g transform="translate(1029,23.5)"><circle r="12.5" fill="#fbc116"/><path d="M0 0L-10.830-6.250A12.500 12.500 0 0 1 10.830-6.250z" fill="#e33b2e"/><path d="M0 0L-10.830-6.250A12.500 12.500 0 0 0 0 12.500z" fill="#2ba24c"/><path d="M-10.830-6.250A12.500 12.500 0 0 1 10.830-6.250L5-6.250H0z" fill="#e33b2e"/><circle r="5.800" fill="#fff"/><circle r="4.600" fill="#3f86f0"/></g><rect x="1053" y="4" width="39.500" height="40" rx="4" fill="#f1b9b4"/><circle cx="1072.700" cy="24" r="12" fill="#5562ea"/><path d="M1066 20.5q6.700-3.400 13.400 0q2 4 2 8.400q-2.400 1.800-4.400 2l-1-1.800q-3.300 1-6.600 0l-1 1.800q-2-.2-4.400-2q0-4.400 2-8.400z" fill="#fff"/><ellipse cx="1070.200" cy="26" rx="1.500" ry="1.800" fill="#5562ea"/><ellipse cx="1075.200" cy="26" rx="1.500" ry="1.800" fill="#5562ea"/><circle cx="1082.800" cy="14.599999999999909" r="5.800" fill="#e4483f"/><circle cx="1082.800" cy="14.599999999999909" r="2.700" fill="#fbe9e6"/><rect x="1070" y="40.40000000000009" width="6" height="2.600" rx="1.300" fill="#d83a2c"/><circle cx="1116.500" cy="24" r="12" fill="url(#ed)"/><path d="M1110 28a7 7 0 0 1 13-4.500q2 4-3 5h-6.500q1 5 7 4.800a12 12 0 0 1-9-1.300a7 7 0 0 1-1.500-4z" fill="#e4f3fb" opacity=".92"/><path d="M1105 24a12 12 0 0 1 22-4q-4-6-11-5-8 1-11 9z" fill="#5fd36a" opacity=".55"/><rect x="1142" y="5" width="37" height="38.500" rx="4" fill="#f2f3f5" stroke="#e2e4e7" stroke-width=".8"/><rect x="1149" y="12" width="24" height="24" rx="1.500" fill="url(#cu)"/><path d="M1162 15.5l-8.600 8.300 8.600 8.300 1.700-3.100-5.300-5.200 5.300-5.200z" fill="#fff"/><circle cx="1164.600" cy="23.799999999999955" r="2.500" fill="#fff"/><rect x="1153" y="40.59999999999991" width="16" height="2.800" rx="1.400" fill="#25808c"/><g transform="translate(0,-1032)"><path d="M1205 1044l11 5-11 5-11-5z" fill="#6cc04a"/><path d="M1194 1049l11 5v13l-11-5.500z" fill="#8a5a3a"/><path d="M1216 1049l-11 5v13l11-5.500z" fill="#6a4028"/><path d="M1194 1049l11 5v3l-11-5z" fill="#58a838"/><path d="M1216 1049l-11 5v3l11-5z" fill="#4a9030"/><rect x="1202" y="1073" width="6" height="2.400" rx="1.200" fill="#8a8c90"/></g><g transform="translate(1249,24)"><circle r="12.5" fill="#fbc116"/><path d="M0 0L-10.830-6.250A12.500 12.500 0 0 1 10.830-6.250z" fill="#e33b2e"/><path d="M0 0L-10.830-6.250A12.500 12.500 0 0 0 0 12.500z" fill="#2ba24c"/><path d="M-10.830-6.250A12.500 12.500 0 0 1 10.830-6.250L5-6.250H0z" fill="#e33b2e"/><circle r="5.800" fill="#fff"/><circle r="4.600" fill="#3f86f0"/></g><circle cx="1257.800" cy="14.599999999999909" r="7" fill="#8a2be2"/><circle cx="1257.800" cy="14" r="2" fill="none" stroke="#f0d8ff" stroke-width="1"/><rect x="1246" y="41" width="6" height="2.400" rx="1.200" fill="#8a8c90"/><path d="M1622.600 26.40000000000009l4.600-4.600 4.600 4.600" fill="none" stroke="#1c1c1c" stroke-width="1.500"/><g stroke="#1f8a8a" fill="none" stroke-width="1.400"><rect x="1656.700" y="16.5" width="4.600" height="9.600" rx="2.300" fill="#2f9a9a"/><path d="M1654.200 23.5a4.800 4.800 0 0 0 9.600 0M1659 28.40000000000009v3"/></g><g stroke="#b4b6b8" fill="none" stroke-width="1"><circle cx="1691" cy="19.5" r="1.800"/><path d="M1691 21.40000000000009l-4 7.600M1691 21.40000000000009l4 7.600M1688 26h6"/></g><circle cx="1728" cy="23" r="7.200" fill="#1870d0"/><circle cx="1734.200" cy="27.40000000000009" r="2.400" fill="#e8b020"/><circle cx="1735.400" cy="26" r="1.800" fill="#d83a2c"/><g fill="none" stroke="#1c1c1c" stroke-width="1.400"><path d="M1759.200 21.40000000000009a11 11 0 0 1 15.600 0M1761.800 24.200000000000045a7.200 7.200 0 0 1 10.400 0M1764.400 27a3.600 3.600 0 0 1 5.200 0"/></g><circle cx="1767" cy="29.200000000000045" r="1.100" fill="#1c1c1c"/><g fill="none" stroke="#1c1c1c" stroke-width="1.300"><path d="M1783.400 21.40000000000009h2.800l3.600-3.400v11.600l-3.600-3.400h-2.800z"/><path d="M1792.400 21a4 4 0 0 1 0 6.200M1794.800 18.799999999999955a7 7 0 0 1 0 10.600M1797.200 16.799999999999955a10 10 0 0 1 0 14.600"/></g><g fill="none" stroke="#1c1c1c" stroke-width="1.300"><path d="M1897.600 28h-11.200q1.600-1.600 1.600-5q0-4.600 4-4.600q1.400 0 2.300.600M1896.100 24.799999999999955q.300 1.900 1.500 3.200"/><path d="M1890.400 29.59999999999991a1.700 1.700 0 0 0 3.400 0"/></g></svg>
<span style="left:32.58px;top:1040.4px;font-size:9.5px;line-height:13px;color:#ffffff;font-weight:700;transform:scaleX(1.107);transform-origin:50% 50%;">9+</span>
<span style="left:51px;top:1041px;font-size:11px;line-height:15px;color:#1e1e1e;transform:scaleX(0.976);transform-origin:0 50%;">32°C</span>
<span style="left:51px;top:1055.6px;font-size:11.98px;line-height:17px;color:#555759;transform:scaleX(0.835);transform-origin:0 50%;">くもり時々晴れ</span>
<span style="left:734px;top:1046.41px;font-size:14.45px;line-height:20px;color:#666869;transform:scaleX(0.945);transform-origin:0 50%;">検索</span>
<span style="left:1846.97px;top:1041px;font-size:12px;line-height:17px;color:#1e1e1e;transform:scaleX(0.906);transform-origin:100% 50%;">18:09</span>
<span style="left:1816.94px;top:1057px;font-size:12px;line-height:17px;color:#1e1e1e;">2025/09/15</span>
<span style="left:1893.2px;top:1049.2px;font-size:7.5px;line-height:10px;color:#1c1c1c;font-weight:700;">z</span>
<span style="left:1897.6px;top:1045.3px;font-size:6.5px;line-height:9px;color:#1c1c1c;font-weight:700;">z</span>
</div></body></html>
